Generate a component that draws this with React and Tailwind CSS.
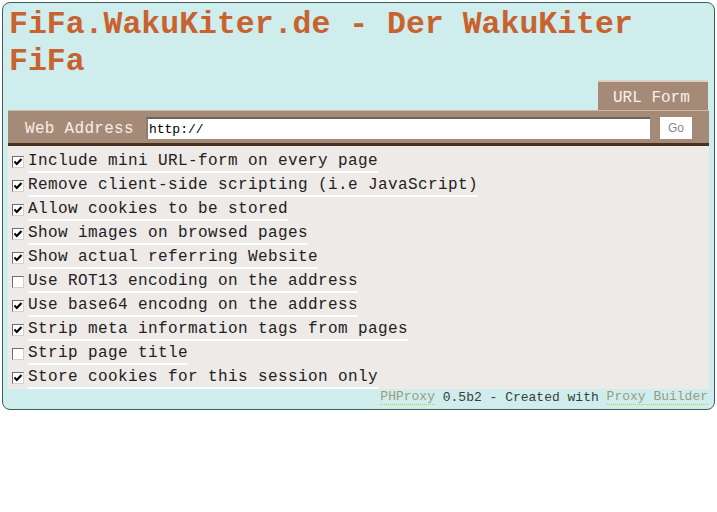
import React from 'react';

const options = [
  { label: 'Include mini URL-form on every page', checked: true },
  { label: 'Remove client-side scripting (i.e JavaScript)', checked: true },
  { label: 'Allow cookies to be stored', checked: true },
  { label: 'Show images on browsed pages', checked: true },
  { label: 'Show actual referring Website', checked: true },
  { label: 'Use ROT13 encoding on the address', checked: false },
  { label: 'Use base64 encodng on the address', checked: true },
  { label: 'Strip meta information tags from pages', checked: true },
  { label: 'Strip page title', checked: false },
  { label: 'Store cookies for this session only', checked: true },
];

const CheckBox = ({ checked }) => (
  <span className="self-center mt-[1px] w-[12px] h-[12px] shrink-0 bg-white border border-t-[#6f6f6f] border-l-[#6f6f6f] border-r-[#d4d0c8] border-b-[#d4d0c8] flex items-center justify-center">
    {checked && (
      <svg width="10" height="10" viewBox="0 0 10 10">
        <path d="M1.5 4.5 L3.8 7 L8.5 2" stroke="#000" strokeWidth="2.2" fill="none" />
      </svg>
    )}
  </span>
);

export default function App() {
  return (
    <div className="p-[2px] font-['Liberation_Mono','Courier_New',monospace]">
      <div className="border border-[#3a5e5e] rounded-lg bg-[#cfeded] px-[5px] pt-[3px] pb-[3px]">
        <h1 className="text-[31.5px] leading-[37px] font-bold text-[#c8622e] pl-[1px]">
          FiFa.WakuKiter.de - Der WakuKiter FiFa
        </h1>

        {/* tab */}
        <div className="flex justify-end">
          <div className="mr-[1px] h-[30px] w-[110px] bg-[#a68a78] border-t-2 border-[#ddd0c4] flex items-center pl-[15px] pt-[3px] text-[16px] text-[#f6f0ea]">
            URL Form
          </div>
        </div>

        {/* address bar */}
        <form className="h-[36px] bg-[#a68a78] border-t border-[#cbb9aa] border-b-[3px] border-b-[#4a3022] flex items-center pl-[17px] pr-[17px]">
          <label className="text-[16px] tracking-[0.3px] text-[#f6eee6] mr-[12px] mt-[3px]">Web Address</label>
          <input
            type="text"
            defaultValue="http://"
            className="mt-[2px] h-[22px] flex-1 bg-white border-t-2 border-l-2 border-t-[#6e625a] border-l-[#8a7c72] px-[1px] text-[13px] text-black outline-none font-['Liberation_Mono',monospace]"
          />
          <button type="button" className="mt-[2px] ml-[10px] w-[32px] h-[22px] bg-white text-[12px] text-[#888] font-['Liberation_Sans',Arial,sans-serif]">
            Go
          </button>
        </form>

        {/* options */}
        <div className="bg-[#eeeae8] pt-[3px]">
          {options.map(opt => (
            <div key={opt.label} className="h-[24px] flex items-end pl-[4px]">
              <CheckBox checked={opt.checked} />
              <span className="ml-[4px] text-[16px] leading-[20px] tracking-[0.4px] text-[#222] border-b-2 border-white whitespace-nowrap">
                {opt.label}
              </span>
            </div>
          ))}
        </div>

        <div className="h-[17px] flex items-center justify-end pr-[1px] text-[13px] text-[#3a3a3a]">
          <span className="text-[#9a9c7c] border-b border-dotted border-[#e0c030] leading-[14px]">PHProxy</span>
          <span className="whitespace-pre"> 0.5b2 - Created with </span>
          <span className="text-[#9a9c7c] border-b border-dotted border-[#e0c030] leading-[14px]">Proxy Builder</span>
        </div>
      </div>
    </div>
  );
}
